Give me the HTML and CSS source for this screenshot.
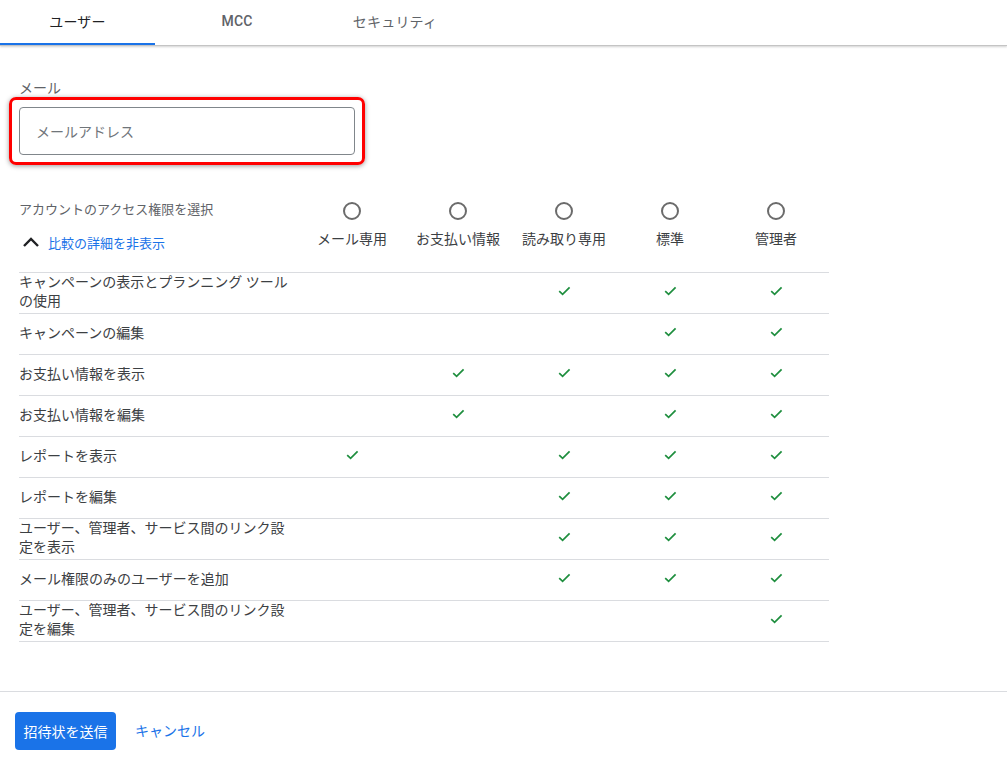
FILE: index.html
```html
<!DOCTYPE html>
<html lang="ja">
<head>
<meta charset="utf-8">
<title>ユーザーを招待</title>
<link rel="stylesheet" href="styles.css">
</head>
<body>
<div class="tabs">
  <div class="tab active">ユーザー</div>
  <div class="tab mcc">MCC</div>
  <div class="tab">セキュリティ</div>
</div>

<main class="content">
  <label class="field-label">メール</label>
  <div class="highlight">
    <div class="input">メールアドレス</div>
  </div>

  <div class="matrix">
    <div class="head-label">
      <div class="head-title">アカウントのアクセス権限を選択</div>
      <div class="toggle">
        <svg class="chev" width="18" height="12" viewBox="0 0 18 12"><polyline points="2,10 9,3 16,10" fill="none" stroke="#202124" stroke-width="2.4"/></svg>
        <span>比較の詳細を非表示</span>
      </div>
    </div>
    <div class="head-col"><span class="radio"></span><span class="col-name">メール専用</span></div>
    <div class="head-col"><span class="radio"></span><span class="col-name">お支払い情報</span></div>
    <div class="head-col"><span class="radio"></span><span class="col-name">読み取り専用</span></div>
    <div class="head-col"><span class="radio"></span><span class="col-name">標準</span></div>
    <div class="head-col"><span class="radio"></span><span class="col-name">管理者</span></div>
  </div>

  <div class="rows" id="rows"></div>
</main>

<footer class="footer">
  <button class="btn-primary">招待状を送信</button>
  <button class="btn-text">キャンセル</button>
</footer>

<script>
  var data = [
    ["キャンペーンの表示とプランニング ツールの使用", [0,0,1,1,1]],
    ["キャンペーンの編集", [0,0,0,1,1]],
    ["お支払い情報を表示", [0,1,1,1,1]],
    ["お支払い情報を編集", [0,1,0,1,1]],
    ["レポートを表示", [1,0,1,1,1]],
    ["レポートを編集", [0,0,1,1,1]],
    ["ユーザー、管理者、サービス間のリンク設定を表示", [0,0,1,1,1]],
    ["メール権限のみのユーザーを追加", [0,0,1,1,1]],
    ["ユーザー、管理者、サービス間のリンク設定を編集", [0,0,0,0,1]]
  ];
  var check = '<svg width="13" height="10" viewBox="0 0 13 10"><polyline points="1.2,5.2 4.6,8.4 11.6,1.4" fill="none" stroke="#1e8e3e" stroke-width="1.7"/></svg>';
  var html = '';
  data.forEach(function (r) {
    html += '<div class="row"><div class="row-label">' + r[0] + '</div>';
    r[1].forEach(function (v) {
      html += '<div class="cell">' + (v ? check : '') + '</div>';
    });
    html += '</div>';
  });
  document.getElementById('rows').innerHTML = html;
</script>
</body>
</html>
```

FILE: styles.css
```css
* { box-sizing: border-box; }
html, body { margin: 0; padding: 0; background: #fff; }
body {
  font-family: Roboto, "Noto Sans CJK JP", sans-serif;
  font-size: 14px;
  color: #3c4043;
  width: 1007px;
  height: 769px;
  overflow: hidden;
}

.tabs {
  display: flex;
  height: 46px;
  border-bottom: 1px solid #c4c4c4;
  box-shadow: 0 1px 2px rgba(0,0,0,0.18);
}
.tab {
  width: 158px;
  height: 45px;
  display: flex;
  align-items: center;
  justify-content: center;
  padding-bottom: 4px;
  color: #5f6368;
  font-size: 14px;
  letter-spacing: 0.2px;
}
.tab.active {
  width: 155px;
  margin-right: 3px;
  color: #202124;
  border-bottom: 2px solid #1a73e8;
  padding-bottom: 2px;
}
.tab.mcc { font-weight: 500; }

.content {
  padding-left: 19px;
}
.field-label {
  display: block;
  margin-top: 33px;
  line-height: 18px;
  font-size: 14px;
  color: #5f6368;
}
.highlight {
  margin-left: -10px;
  width: 356px;
  border: 3px solid #ff0000;
  border-radius: 7px;
  padding: 7px;
  box-shadow: 0 1px 5px rgba(0,0,0,0.4);
}
.input {
  height: 48px;
  border: 1px solid #80868b;
  border-radius: 4px;
  padding-left: 16px;
  display: flex;
  align-items: center;
  color: #70757a;
  font-size: 14px;
}

.matrix {
  display: grid;
  grid-template-columns: 280px repeat(5, 106px);
  margin-top: 35px;
  padding-bottom: 20px;
}
.head-title {
  font-size: 13px;
  line-height: 20px;
  color: #5f6368;
}
.toggle {
  display: flex;
  align-items: center;
  margin-top: 12px;
  height: 20px;
  color: #1a73e8;
  font-size: 13px;
}
.chev { margin-left: 3px; margin-right: 8px; }
.head-col {
  display: flex;
  flex-direction: column;
  align-items: center;
  padding-top: 2px;
}
.radio {
  width: 18px;
  height: 18px;
  border: 2px solid #6b6b6b;
  border-radius: 50%;
}
.col-name {
  margin-top: 9px;
  line-height: 20px;
  color: #3c4043;
  white-space: nowrap;
}

.rows {
  width: 810px;
  border-bottom: 1px solid #dadce0;
}
.row {
  display: grid;
  grid-template-columns: 280px repeat(5, 106px);
  min-height: 41px;
  border-top: 1px solid #dadce0;
  align-items: center;
}
.row-label {
  line-height: 19px;
  padding-bottom: 2px;
  width: 276px;
  color: #3c4043;
}
.cell {
  display: flex;
  justify-content: center;
  align-items: center;
  padding-bottom: 4px;
}
.cell svg { display: block; }

.footer {
  margin-top: 49px;
  border-top: 1px solid #dadce0;
  padding: 20px 0 0 15px;
  display: flex;
  align-items: center;
  gap: 19px;
}
.btn-primary {
  height: 38px;
  width: 101px;
  border: none;
  border-radius: 4px;
  background: #1a73e8;
  color: #fff;
  font-family: Roboto, "Noto Sans CJK JP", sans-serif;
  font-size: 14px;
  padding: 0;
}
.btn-text {
  border: none;
  background: none;
  padding: 0;
  color: #1a73e8;
  font-family: Roboto, "Noto Sans CJK JP", sans-serif;
  font-size: 14px;
  line-height: 20px;
}
```
